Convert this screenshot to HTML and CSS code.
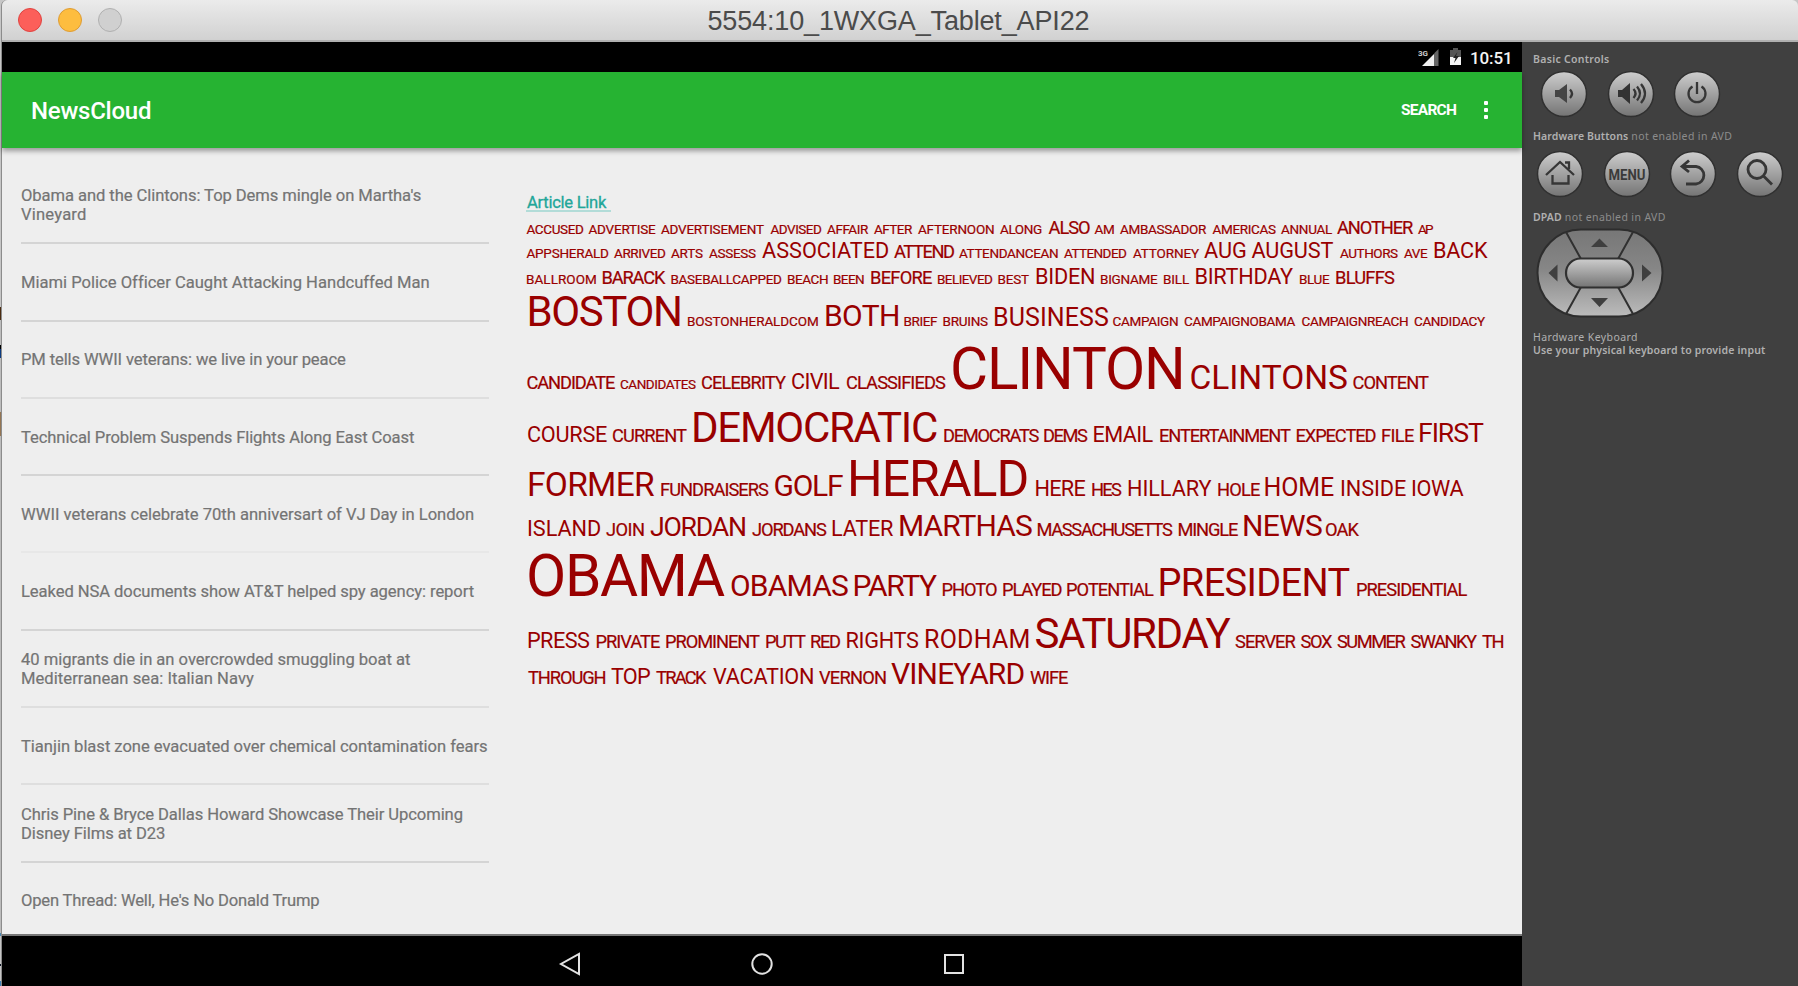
FILE: index.html
```
<!DOCTYPE html>
<html lang="en">
<head>
<meta charset="utf-8">
<title>5554:10_1WXGA_Tablet_API22</title>
<link rel="stylesheet" href="styles.css">
</head>
<body>
<div class="window">
  <header class="titlebar">
    <div class="lights"><i class="light red"></i><i class="light amber"></i><i class="light off"></i></div>
    <h1 class="window-title"><span data-ink="380">5554:10_1WXGA_Tablet_API22</span></h1>
  </header>
  <div class="body">
    <main class="device">
      <div class="status">
        <svg class="signal" width="22" height="20" viewBox="0 0 22 20">
          <text x="0" y="8" class="net">3G</text>
          <path d="M20.5 1V18H16V5.500z" fill="#666"/>
          <path d="M16 6V18H4z" fill="#f0f0f0"/>
        </svg>
        <svg class="battery" width="13" height="20" viewBox="0 0 13 20">
          <path d="M4 1h5v2h3v15H1V3h3z" fill="#555"/>
          <path d="M1 10h11v8H1z" fill="#f4f4f4"/>
          <path d="M8.500 5L4 11h2.500L5 16l5-7H7z" fill="#222"/>
        </svg>
        <span class="clock"><span data-ink="39">10:51</span></span>
      </div>
      <div class="toolbar">
        <span class="app-name"><span data-ink="119">NewsCloud</span></span>
        <span class="search"><span data-ink="55">SEARCH</span></span>
        <svg class="more" width="6" height="22" viewBox="0 0 6 22" fill="#fff"><rect x="1" y="2" width="4" height="4" rx="1"/><rect x="1" y="9" width="4" height="4" rx="1"/><rect x="1" y="16" width="4" height="4" rx="1"/></svg>
      </div>
      <div class="content">
        <ul class="headlines">
          <li><span data-ink="400">Obama and the Clintons: Top Dems mingle on Martha's</span><span data-ink="65">Vineyard</span></li>
          <li><span data-ink="406">Miami Police Officer Caught Attacking Handcuffed Man</span></li>
          <li class="soft"><span data-ink="324">PM tells WWII veterans: we live in your peace</span></li>
          <li><span data-ink="393">Technical Problem Suspends Flights Along East Coast</span></li>
          <li class="softer"><span data-ink="453">WWII veterans celebrate 70th anniversart of VJ Day in London</span></li>
          <li><span data-ink="452">Leaked NSA documents show AT&amp;T helped spy agency: report</span></li>
          <li class="soft"><span data-ink="389">40 migrants die in an overcrowded smuggling boat at</span><span data-ink="232">Mediterranean sea: Italian Navy</span></li>
          <li class="soft"><span data-ink="466">Tianjin blast zone evacuated over chemical contamination fears</span></li>
          <li><span data-ink="442">Chris Pine &amp; Bryce Dallas Howard Showcase Their Upcoming</span><span data-ink="143">Disney Films at D23</span></li>
          <li><span data-ink="299">Open Thread: Well, He's No Donald Trump</span></li>
        </ul>
        <section class="article">
          <a class="article-link"><span data-ink="80">Article Link</span></a>
          <div class="cloud" id="cloud"></div>
        </section>
      </div>
      <nav class="navbar">
        <svg width="28" height="28" viewBox="0 0 28 28"><path d="M23 4V24L5 14z"/></svg>
        <svg width="28" height="28" viewBox="0 0 28 28"><circle cx="14" cy="14" r="9.700"/></svg>
        <svg width="28" height="28" viewBox="0 0 28 28"><rect x="5" y="5" width="18" height="18"/></svg>
      </nav>
    </main>
    <aside class="panel">
      <svg width="0" height="0" class="defs"><defs>
        <linearGradient id="key" x1="0" y1="0" x2="0" y2="1"><stop offset="0" stop-color="#cecece"/><stop offset="1" stop-color="#747474"/></linearGradient>
        <linearGradient id="pad" x1="0" y1="0" x2="0" y2="1"><stop offset="0" stop-color="#777"/><stop offset=".45" stop-color="#868686"/><stop offset="1" stop-color="#bcbcbc"/></linearGradient>
      </defs></svg>
      <p class="label"><b data-ink="76">Basic Controls</b></p>
      <div class="keys">
        <svg width="48" height="48" viewBox="0 0 48 48"><circle cx="24" cy="24" r="22.500" class="cap"/><path d="M15 20h4l8-6v19l-8-6h-4z" fill="#444"/><path d="M30 19.500q4 4 0 8.500" class="ln"/></svg>
        <svg width="48" height="48" viewBox="0 0 48 48"><circle cx="24" cy="24" r="22.500" class="cap"/><path d="M11 20h4l8-7v21l-8-7h-4z" fill="#333"/><path d="M26.500 19q4 4.500 0 9M30 16.500q6 7 0 14M34 14q8 9.500 0 19" class="ln"/></svg>
        <svg width="48" height="48" viewBox="0 0 48 48"><circle cx="24" cy="24" r="22.500" class="cap"/><path d="M24 12v12M19.500 16.500a8.500 8.500 0 1 0 9 0" class="ln"/></svg>
      </div>
      <p class="label hw"><b data-ink="95">Hardware Buttons</b><span class="dim" data-ink="101">not enabled in AVD</span></p>
      <div class="keys second">
        <svg width="48" height="48" viewBox="0 0 48 48"><circle cx="24" cy="24" r="22.500" class="cap"/><path d="M10 25L24 12L38 25M29 12.500h4V19M16.500 25v8.500h16V25" class="ln"/></svg>
        <svg width="48" height="48" viewBox="0 0 48 48"><circle cx="24" cy="24" r="22.500" class="cap"/><text x="24" y="29.500" class="menu" textLength="37" lengthAdjust="spacingAndGlyphs">MENU</text></svg>
        <svg width="48" height="48" viewBox="0 0 48 48"><circle cx="24" cy="24" r="22.500" class="cap"/><path d="M20 10.500L13 16.500L20 22M14 16.500H27a8.800 8.800 0 0 1 0 17.500H17" class="ln thick"/></svg>
        <svg width="48" height="48" viewBox="0 0 48 48"><circle cx="24" cy="24" r="22.500" class="cap"/><circle cx="21" cy="19.500" r="9" class="ln thick"/><path d="M27.500 26L36 34.500" class="ln thick"/></svg>
      </div>
      <p class="label dp"><b data-ink="29">DPAD</b><span class="dim" data-ink="101">not enabled in AVD</span></p>
      <svg class="dpad" width="128" height="90" viewBox="0 0 128 90">
        <rect x="1.500" y="1.500" width="125" height="87" rx="43.500" fill="url(#pad)" stroke="#2d2d2d" stroke-width="2"/>
        <path d="M30 4L45 31M97 4L82 31M30 86L45 59M97 86L82 59" stroke="#303030" stroke-width="2"/>
        <rect x="30" y="30.500" width="67" height="29" rx="14.500" fill="url(#key)" stroke="#303030" stroke-width="2.200"/>
        <path d="M63.500 10.500L72 19H55zM63.500 79L72 70H55zM12.500 45L21.500 36.500v17zM115.500 45L106 36.500v17z" fill="#3f3f3f"/>
      </svg>
      <p class="label kb"><span data-ink="103">Hardware Keyboard</span></p>
      <p class="label"><span class="semi" data-ink="232">Use your physical keyboard to provide input</span></p>
    </aside>
  </div>
</div>
<script src="cloud.js"></script>
</body>
</html>
```

FILE: styles.css
```
* { box-sizing: border-box; }
body { margin: 0; font-family: Roboto, "Liberation Sans", sans-serif; overflow: hidden;
  background: linear-gradient(#c6c6c6 0 307px, #4a2c10 307px 320px, #bdbdbd 320px 345px, #000 345px 349px, #0c3b80 349px 358px, #bdbdbd 358px 412px, #947552 412px 436px, #bcbcbc 436px 933px, #4b88b5 933px 936px, #c6c6c6 936px 964px, #101828 964px 966px, #c6c6c6 966px 981px, #3f80b8 981px); }
p, h1, ul { margin: 0; padding: 0; }
.window { height: 986px; margin-left: 1px; border-left: 1px solid #8c8c8c; display: flex; flex-direction: column; border-radius: 6px 6px 0 0; }
.titlebar { height: 42px; flex: none; display: grid; grid-template-columns: 1fr auto 1fr; align-items: center;
  background: linear-gradient(#ebebeb, #d1d1d1); border-bottom: 2px solid #b0b0b0; border-radius: 6px 6px 0 0; }
.lights { display: flex; gap: 16px; padding-left: 16px; }
.light { width: 24px; height: 24px; border-radius: 50%; border: 1px solid; }
.red { background: #fc5f5a; border-color: #e04340; }
.amber { background: #fdbd3f; border-color: #de9c34; }
.off { background: #d0d0d0; border-color: #b0b0b0; }
.window-title { font: 400 27px/40px "Liberation Sans", sans-serif; color: #4b4b4b; padding-top: 1px; height: 40px; width: 384px; white-space: nowrap; margin-left: -1px; }
.body { flex: 1; min-height: 0; display: flex; }
.device { width: 1520px; flex: none; display: flex; flex-direction: column; background: #eee; }
.status { height: 30px; background: #000; display: flex; justify-content: flex-end; align-items: center; padding-right: 10px; color: #f4f4f4; }
.signal { margin: 1px 9px 0 0; }
.battery { margin: 0 8px 0 0; }
.net { font: 700 8px Roboto, sans-serif; fill: #ccc; }
.clock { font-size: 17px; font-weight: 500; width: 42px; line-height: 32px; padding-top: 1px; white-space: nowrap; }
.toolbar { height: 76px; flex: none; background: #26b332; color: #fff; display: flex; align-items: center; padding: 0 33px 0 29px; box-shadow: 0 3px 5px rgba(0,0,0,.36); z-index: 1; }
.app-name { font-size: 24px; font-weight: 500; line-height: 28px; padding-top: 2px; flex: 1; white-space: nowrap; }
.search { font-size: 15.500px; font-weight: 700; width: 57px; margin-right: 25px; }
.content { flex: 1; min-height: 0; display: flex; overflow: hidden; }
.headlines { list-style: none; width: 468px; margin: 19px 37px 0 19px; color: #747474; font-size: 16.600px; line-height: 19px; }
.headlines li { height: 77.300px; padding-top: 1px; border-bottom: 2px solid #d4d4d4; display: flex; flex-direction: column; justify-content: center; white-space: nowrap; }
.headlines .soft { border-color: #dedede; }
.headlines .softer { border-color: #e7e7e7; }
.headlines li:last-child { border-color: transparent; }
.headlines span { -webkit-text-stroke: .2px; }
.article { flex: 1; padding-top: 44px; }
.article-link { display: block; width: 85px; height: 20px; line-height: 22px; font-size: 16.600px; color: #22a699; border-bottom: 2px solid #b2dcd8; white-space: nowrap; padding-left: 1px; -webkit-text-stroke: .3px; }
.cloud { color: #900; }
.line { display: flex; align-items: baseline; line-height: 1; white-space: nowrap; }
.strut { width: 0; height: 100%; flex: none; }
.word { flex: none; }
.s8 { font-size: 13.500px; } .s11 { font-size: 18.300px; } .s13 { font-size: 21.700px; } .s15 { font-size: 25px; }
.s16 { font-size: 26.700px; } .s18 { font-size: 30px; } .s20 { font-size: 33.500px; } .s23 { font-size: 38px; }
.s25 { font-size: 42px; } .s30 { font-size: 50px; } .s35 { font-size: 58.500px; }
.s8, .s11 { -webkit-text-stroke: .2px; }
.navbar { height: 52px; flex: none; background: #000; border-top: 2px solid #777; display: flex; gap: 164px; justify-content: center; align-items: center; padding-top: 5px; }
.navbar svg { fill: none; stroke: #e2e2e2; stroke-width: 2; }
.panel { flex: 1; background: #404040; padding: 11px 0 0 11px; color: #b0b0b0; font-family: "Noto Sans", "Open Sans", sans-serif; }
.defs { display: block; }
.label { height: 13px; line-height: 13px; font-size: 10.500px; white-space: nowrap; display: flex; gap: 3px; }
.label b { font-weight: 600; }
.dim { color: #8c8c8c; }
.semi { font-weight: 600; }
.keys { display: flex; gap: 18.500px; padding-left: 7px; margin-top: 4px; }
.second { padding-left: 3px; margin-top: 7px; }
.keys svg { flex: none; }
.cap { fill: url(#key); stroke: #303030; stroke-width: 1.500; }
.ln { fill: none; stroke: #363636; stroke-width: 2.300; }
.thick { stroke-width: 2.800; }
.menu { font: 700 14px Roboto, sans-serif; fill: #3a3a3a; text-anchor: middle; }
.hw { margin-top: 12px; }
.dp { margin-top: 13px; }
.dpad { display: block; margin: 4px 0 0 3px; }
.kb { margin-top: 13px; }
```

FILE: cloud.js
```
// Each line: [baseline y, "WORD left right size" ...], ink edges in window pixels.
const LINES = [
  [234, "ACCUSED 526.5 584 8,ADVERTISE 588.5 656 8,ADVERTISEMENT 661 764 8,ADVISED 770.5 822 8,AFFAIR 827 869 8,AFTER 874 913 8,AFTERNOON 918 994 8,ALONG 1000 1042 8,ALSO 1048.5 1090 11,AM 1094.5 1114 8,AMBASSADOR 1120 1207 8,AMERICAS 1212.5 1276 8,ANNUAL 1281 1332 8,ANOTHER 1337 1413 11,AP 1418 1434 8"],
  [258, "APPSHERALD 526.5 609 8,ARRIVED 614 666 8,ARTS 671 703 8,ASSESS 709 756 8,ASSOCIATED 762 888 13,ATTEND 894 954 11,ATTENDANCEAN 959 1058 8,ATTENDED 1064 1127 8,ATTORNEY 1133 1199 8,AUG 1204 1246 13,AUGUST 1251.5 1333.5 13,AUTHORS 1340 1398 8,AVE 1404 1428 8,BACK 1434 1488 13"],
  [284, "BALLROOM 527 596 8,BARACK 602.5 666 11,BASEBALLCAPPED 671.5 782 8,BEACH 788 828 8,BEEN 834 864 8,BEFORE 871 932 11,BELIEVED 938 993 8,BEST 998.5 1029 8,BIDEN 1036 1094 13,BIGNAME 1101 1158 8,BILL 1164 1189 8,BIRTHDAY 1195.5 1293 13,BLUE 1300 1330 8,BLUFFS 1336 1395 11"],
  [326, "BOSTON 529.5 680 25,BOSTONHERALDCOM 688 818 8,BOTH 826 898 18,BRIEF 904.5 938 8,BRUINS 943.5 988 8,BUSINESS 995 1108 15,CAMPAIGN 1112.5 1178 8,CAMPAIGNOBAMA 1184 1295.5 8,CAMPAIGNREACH 1301.5 1408 8,CANDIDACY 1414 1485 8"],
  [389.4, "CANDIDATE 527.5 615 11,CANDIDATES 620 696 8,CELEBRITY 702 786 11,CIVIL 792 840 13,CLASSIFIEDS 847 946 11,CLINTON 953 1181 35,CLINTONS 1190.5 1347 20,CONTENT 1353.5 1429 11"],
  [442, "COURSE 528 607 13,CURRENT 613 687 11,DEMOCRATIC 694 937 25,DEMOCRATS 944 1039.5 11,DEMS 1044 1088 11,EMAIL 1093.5 1153.5 13,ENTERTAINMENT 1160 1291 11,EXPECTED 1296.5 1375.5 11,FILE 1382 1414 11,FIRST 1420 1484 16"],
  [496.4, "FORMER 529 655 20,FUNDRAISERS 661 769 11,GOLF 774.5 843 18,HERALD 851 1026.5 30,HERE 1035.5 1085.5 13,HES 1092 1122 11,HILLARY 1128 1211.5 13,HOLE 1218 1260 11,HOME 1265.5 1334 15,INSIDE 1341 1406 13,IOWA 1412 1463.5 13"],
  [535.6, "ISLAND 528 600 13,JOIN 606 644 11,JORDAN 650 745 16,JORDANS 752 827 11,LATER 832 893 13,MARTHAS 900 1032 18,MASSACHUSETTS 1037.5 1173 11,MINGLE 1178.5 1238 11,NEWS 1244 1322 18,OAK 1326 1359.5 11"],
  [596.3, "OBAMA 529 725 35,OBAMAS 731 848 18,PARTY 854.5 937 18,PHOTO 942.5 997 11,PLAYED 1003 1061.5 11,POTENTIAL 1067 1154 11,PRESIDENT 1160.5 1349.5 23,PRESIDENTIAL 1357 1467.5 11"],
  [648.4, "PRESS 528 590 13,PRIVATE 596.5 660 11,PROMINENT 666 760 11,PUTT 766 806 11,RED 811 840 11,RIGHTS 846.5 919 13,RODHAM 926 1028.5 15,SATURDAY 1035.5 1230.5 25,SERVER 1235 1295.5 11,SOX 1300.5 1332 11,SUMMER 1337 1405.5 11,SWANKY 1410.5 1477 11,TH 1482 1503.5 11"],
  [684.4, "THROUGH 528 605.5 11,TOP 611 650 13,TRACK 656 707 11,VACATION 713 813 13,VERNON 819 886 11,VINEYARD 891 1023.5 18,WIFE 1030 1068 11"]
];

const ctx = document.createElement("canvas").getContext("2d");

// Tracks the text of an element so that its ink spans the given width; returns the left bearing.
function track(el, width) {
  const cs = getComputedStyle(el);
  ctx.font = `${cs.fontWeight} ${cs.fontSize} ${cs.fontFamily}`;
  const m = ctx.measureText(el.textContent);
  const ink = m.actualBoundingBoxLeft + m.actualBoundingBoxRight;
  const spacing = (width - ink) / (el.textContent.length - 1);
  el.style.letterSpacing = spacing.toFixed(3) + "px";
  return -m.actualBoundingBoxLeft;
}

const cloud = document.getElementById("cloud");
const origin = cloud.getBoundingClientRect();
let prev = origin.top;
for (const [base, words] of LINES) {
  const line = document.createElement("div");
  line.className = "line";
  line.style.height = base - prev + "px";
  prev = base;
  const strut = document.createElement("i");
  strut.className = "strut";
  line.append(strut);
  cloud.append(line);
  let pen = origin.left;
  for (const entry of words.split(",")) {
    const [text, left, right, size] = entry.split(" ");
    const word = document.createElement("span");
    word.className = "word s" + size;
    word.textContent = text;
    line.append(word);
    const start = left - track(word, right - left);
    word.style.marginLeft = start - pen + "px";
    word.style.width = right - start + "px";
    pen = +right;
  }
}

for (const el of document.querySelectorAll("[data-ink]")) track(el, +el.dataset.ink);
```
